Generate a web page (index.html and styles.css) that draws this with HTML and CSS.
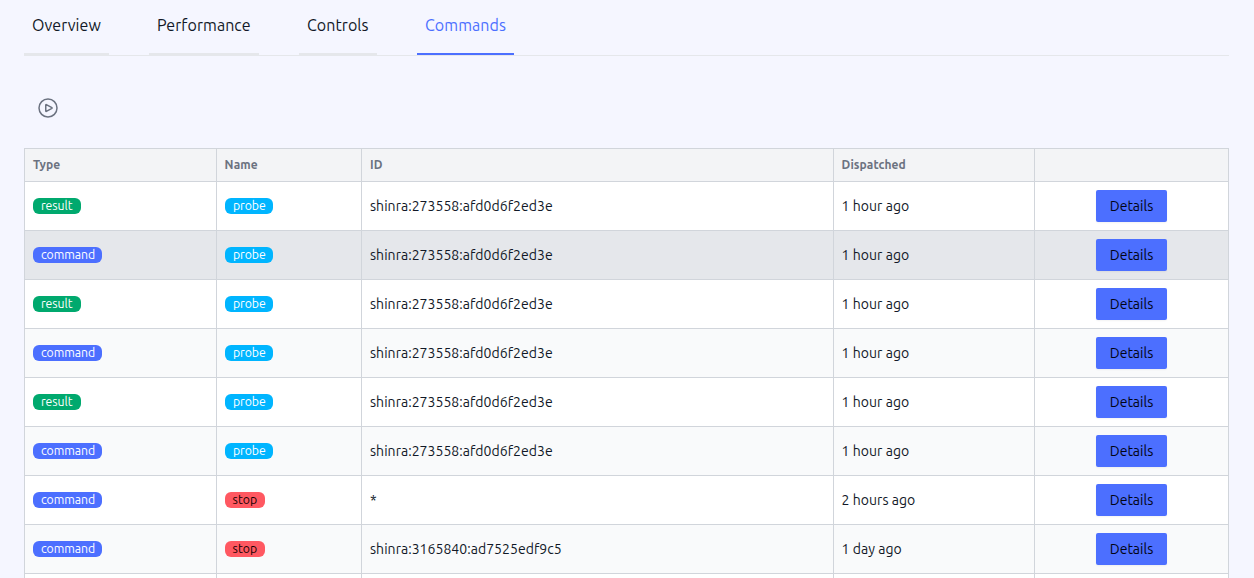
FILE: index.html
```
<!DOCTYPE html>
<html lang="en">
<head>
<meta charset="utf-8">
<title>Commands</title>
<link rel="stylesheet" href="styles.css">
</head>
<body>
<nav class="tabs">
  <a class="tab overview"><span>Overview</span></a>
  <a class="tab performance"><span>Performance</span></a>
  <a class="tab controls"><span>Controls</span></a>
  <a class="tab commands active"><span>Commands</span></a>
</nav>
<div class="toolbar">
  <svg class="play" viewBox="0 0 24 24" fill="none" stroke="currentColor" stroke-width="1.5" stroke-linecap="round" stroke-linejoin="round"><path d="M21 12a9 9 0 11-18 0 9 9 0 0118 0z"/><path d="M15.91 11.672a.375.375 0 010 .656l-5.603 3.113a.375.375 0 01-.557-.328V8.887c0-.286.307-.466.557-.327l5.603 3.112z"/></svg>
</div>
<table class="grid">
  <colgroup><col class="c-type"><col class="c-name"><col class="c-id"><col class="c-time"><col class="c-action"></colgroup>
  <thead><tr><th>Type</th><th>Name</th><th>ID</th><th>Dispatched</th><th></th></tr></thead>
  <tbody>
    <tr><td><span class="badge result">result</span></td><td><span class="badge probe">probe</span></td><td>shinra:273558:afd0d6f2ed3e</td><td>1 hour ago</td><td><button class="btn">Details</button></td></tr>
    <tr class="hovered"><td><span class="badge command">command</span></td><td><span class="badge probe">probe</span></td><td>shinra:273558:afd0d6f2ed3e</td><td>1 hour ago</td><td><button class="btn">Details</button></td></tr>
    <tr><td><span class="badge result">result</span></td><td><span class="badge probe">probe</span></td><td>shinra:273558:afd0d6f2ed3e</td><td>1 hour ago</td><td><button class="btn">Details</button></td></tr>
    <tr><td><span class="badge command">command</span></td><td><span class="badge probe">probe</span></td><td>shinra:273558:afd0d6f2ed3e</td><td>1 hour ago</td><td><button class="btn">Details</button></td></tr>
    <tr><td><span class="badge result">result</span></td><td><span class="badge probe">probe</span></td><td>shinra:273558:afd0d6f2ed3e</td><td>1 hour ago</td><td><button class="btn">Details</button></td></tr>
    <tr><td><span class="badge command">command</span></td><td><span class="badge probe">probe</span></td><td>shinra:273558:afd0d6f2ed3e</td><td>1 hour ago</td><td><button class="btn">Details</button></td></tr>
    <tr><td><span class="badge command">command</span></td><td><span class="badge stop">stop</span></td><td>*</td><td>2 hours ago</td><td><button class="btn">Details</button></td></tr>
    <tr><td><span class="badge command">command</span></td><td><span class="badge stop">stop</span></td><td>shinra:3165840:ad7525edf9c5</td><td>1 day ago</td><td><button class="btn">Details</button></td></tr>
    <tr class="partial"><td></td><td></td><td></td><td></td><td></td></tr>
  </tbody>
</table>
</body>
</html>
```
FILE: styles.css
```
* { box-sizing: border-box; }
body {
  margin: 0;
  padding: 0 25px 0 24px;
  height: 578px;
  overflow: hidden;
  background: #f5f6ff;
  color: #111827;
  font-family: Ubuntu, "Noto Sans", sans-serif;
  font-size: 14px;
}
.tabs {
  display: flex;
  gap: 40px;
  height: 56px;
  border-bottom: 1px solid #e5e7eb;
}
.tab {
  height: 55px;
  padding: 13px 8px 0;
  border-bottom: 2px solid #e5e7eb;
  font-size: 16px;
  line-height: 24px;
  letter-spacing: 0.06px;
  white-space: nowrap;
}
.overview { width: 85px; }
.performance { width: 110px; }
.controls { width: 78px; }
.commands { width: 97px; }
.tab.active { color: #4c6fff; border-color: #4c6fff; }
.toolbar {
  display: flex;
  align-items: center;
  height: 92px;
  padding: 12px 12px 0;
  color: #6b7280;
}
.play { width: 24px; height: 24px; }
.grid {
  width: 1205px;
  table-layout: fixed;
  border-collapse: separate;
  border-spacing: 0;
  border-top: 1px solid #d1d5db;
  border-left: 1px solid #d1d5db;
}
.c-type { width: 192px; }
.c-name { width: 145px; }
.c-id { width: 472px; }
.c-time { width: 201px; }
.c-action { width: 194px; }
th, td {
  padding: 0 8px;
  border-right: 1px solid #d1d5db;
  border-bottom: 1px solid #d1d5db;
  text-align: left;
  vertical-align: middle;
  white-space: nowrap;
  letter-spacing: 0.04px;
}
th:nth-child(2), th:nth-child(4), td:nth-child(4) { padding-left: 7.6px; }
th {
  height: 33px;
  background: #f3f4f6;
  color: #6b7280;
  font-size: 12px;
  line-height: 16px;
  font-weight: 700;
  letter-spacing: 0.08px;
}
td { height: 49px; line-height: 20px; }
.partial td { height: 4px; border-bottom: 0; }
td:last-child { text-align: center; }
tbody tr { background: #fff; }
tbody tr:nth-child(even) { background: #f9fafb; }
tbody tr.hovered { background: #e5e7eb; }
.badge {
  display: block;
  width: 48px;
  height: 16px;
  padding-left: 8px;
  border-radius: 6px;
  color: #fff;
  font-size: 12.25px;
  line-height: 15px;
  letter-spacing: -0.05px;
}
.result { background: #00a96e; }
.command { width: 69px; background: #4c6fff; }
.probe { background: #00b5ff; }
.stop { width: 40px; padding-left: 7.6px; background: #ff5861; color: #160000; letter-spacing: 0.05px; }
.btn {
  display: inline-block;
  width: 71px;
  height: 32px;
  padding: 0;
  border: 0;
  border-radius: 2px;
  background: #4c6fff;
  color: #020414;
  font: inherit;
  line-height: 32px;
  vertical-align: middle;
  box-shadow: 0 1px 2px rgba(0, 0, 0, 0.05);
}
```
